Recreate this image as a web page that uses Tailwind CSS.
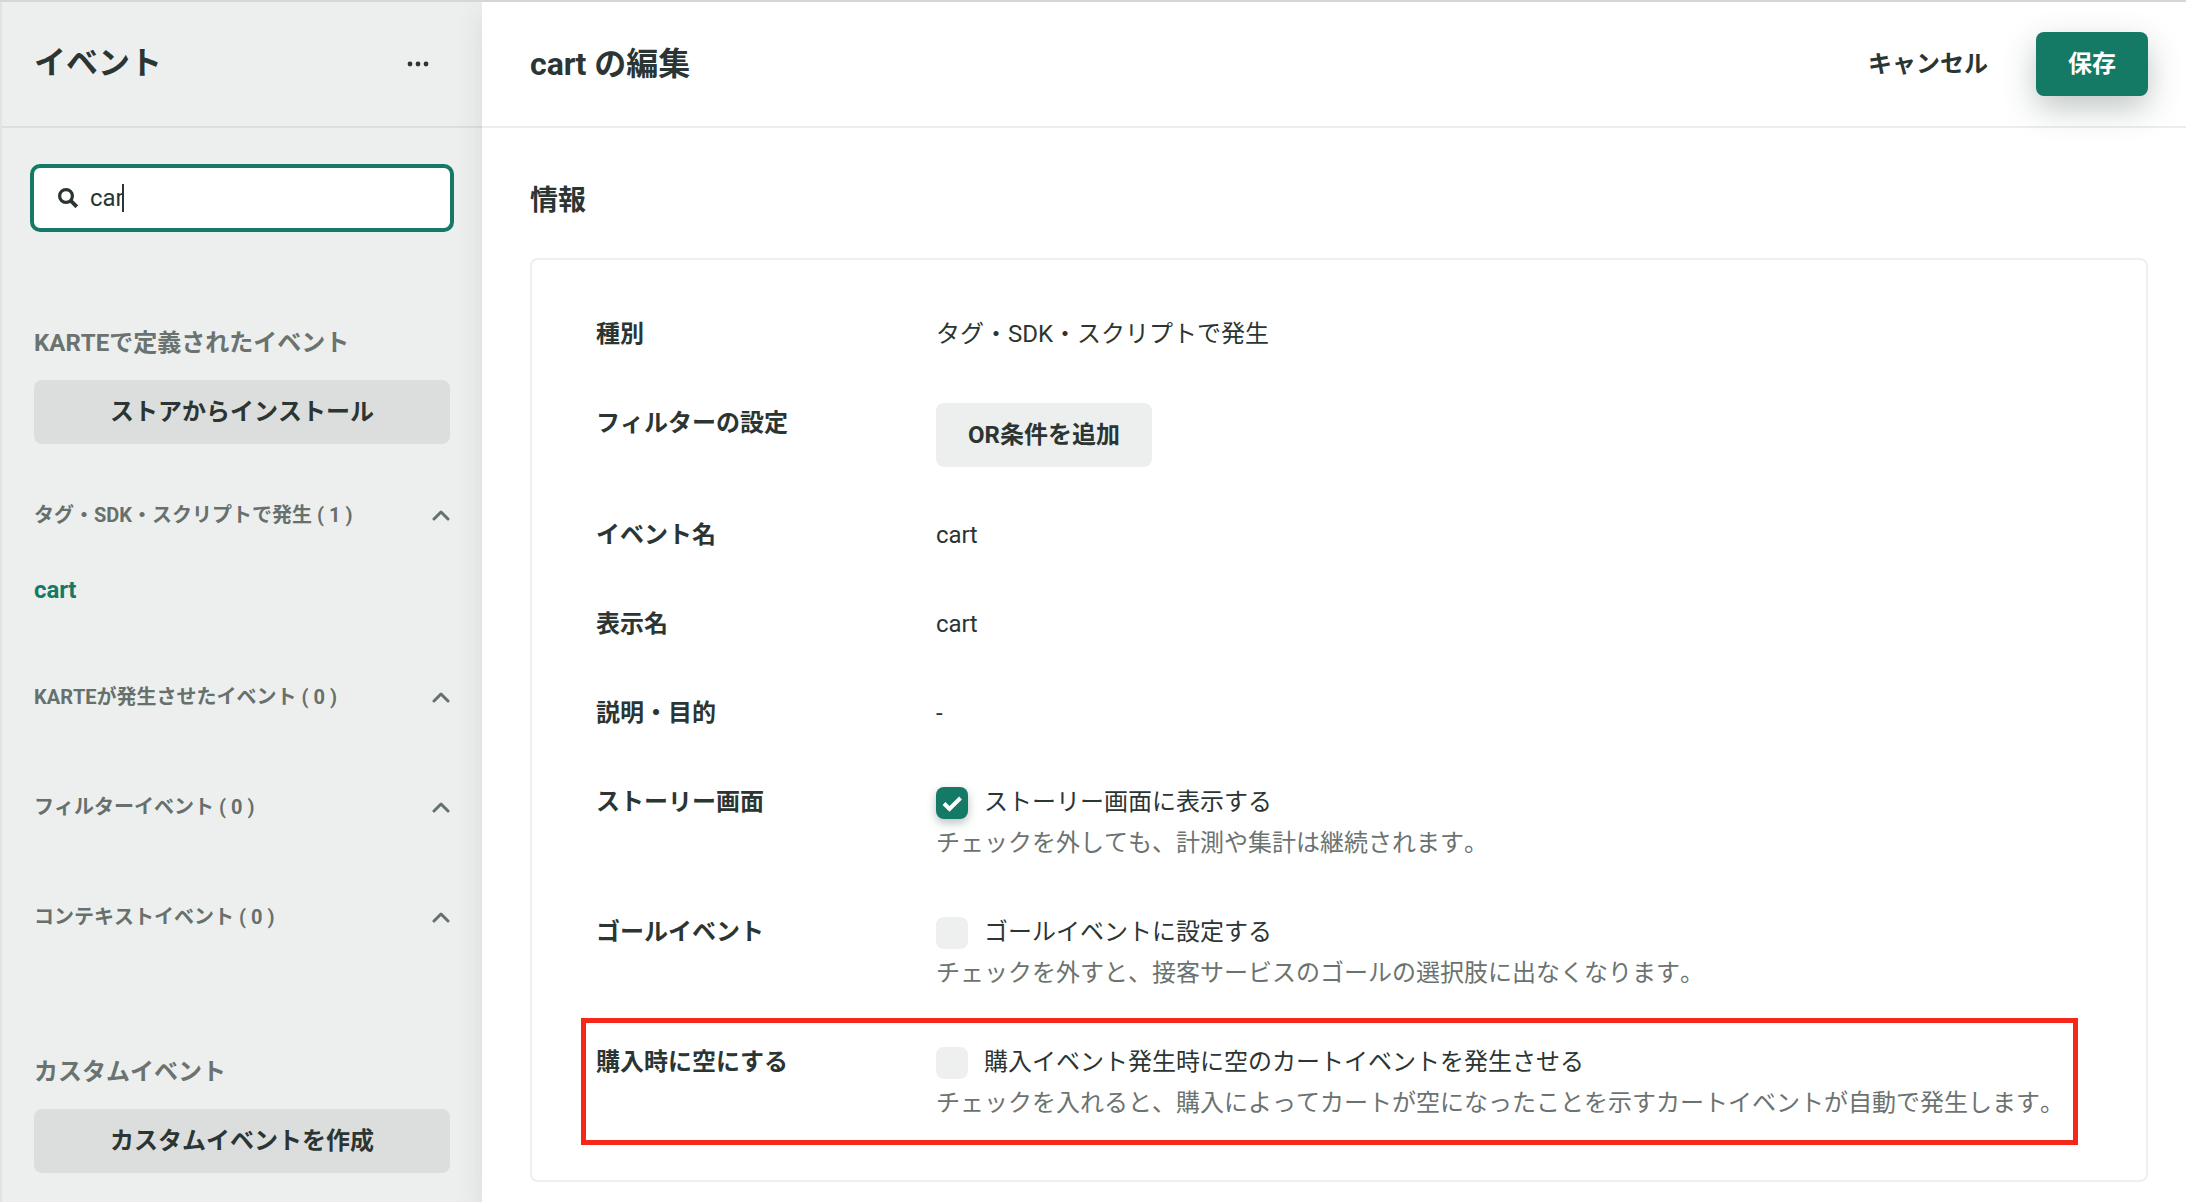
<!DOCTYPE html>
<html lang="ja">
<head>
<meta charset="utf-8">
<title>イベント</title>
<script src="https://cdn.jsdelivr.net/npm/@tailwindcss/browser@4"></script>
</head>
<body class="flex min-h-screen border-t-2 border-[#d6d6d6] bg-white font-['Roboto','Noto_Sans_CJK_JP',sans-serif] text-2xl/[41px] text-[#2b3533] [font-kerning:none]">

<aside class="flex w-[482px] shrink-0 flex-col border-l-2 border-[#e2e4e3] bg-[#edefee]">
  <header class="flex h-[126px] items-center justify-between border-b-2 border-[#dcdedd] pr-[53px] pb-[2px] pl-8">
    <h1 class="text-[32px]/[48px] font-bold">イベント</h1>
    <button type="button" aria-label="メニュー" class="pt-[2px]">
      <svg class="h-6 w-[22px]" viewBox="0 0 22 24" fill="currentColor"><circle cx="3" cy="12" r="2.4"/><circle cx="11" cy="12" r="2.4"/><circle cx="19" cy="12" r="2.4"/></svg>
    </button>
  </header>

  <div class="flex flex-col px-8 pt-9">
    <div class="-mx-1 flex h-[68px] items-center gap-3 rounded-[10px] border-4 border-[#157a65] bg-white px-6">
      <svg class="h-5 w-5 shrink-0" viewBox="0 0 20 20" fill="none" stroke="currentColor" stroke-width="3.2"><circle cx="8" cy="8" r="6.4"/><path d="M12.400 12.400 18.800 18.800" stroke-width="3.800"/></svg>
      <div class="relative grow">
        <input type="search" aria-label="イベントを検索" value="car" class="w-full bg-transparent outline-none">
        <span class="absolute top-[6px] left-8 h-7 w-[2px] bg-[#2b3533]"></span>
      </div>
    </div>

    <h2 class="mt-[91px] font-bold text-[#6b7370]">KARTEで定義されたイベント</h2>
    <button type="button" class="mt-4 h-16 rounded-lg bg-[#dcdedd] font-bold">ストアからインストール</button>

    <button type="button" class="mt-[51px] flex items-center justify-between text-left text-xl/[40px] font-bold text-[#66706d]">タグ・SDK・スクリプトで発生 ( 1 )
      <svg class="h-3 w-[18px]" viewBox="0 0 18 12" fill="none" stroke="currentColor" stroke-width="3" stroke-linecap="round" stroke-linejoin="round"><path d="M2 10 9 3l7 7"/></svg>
    </button>
    <a href="#cart" class="mt-[35px] font-bold text-[#157a65]">cart</a>
    <button type="button" class="mt-[66px] flex items-center justify-between text-left text-xl/[40px] font-bold text-[#66706d]">KARTEが発生させたイベント ( 0 )
      <svg class="h-3 w-[18px]" viewBox="0 0 18 12" fill="none" stroke="currentColor" stroke-width="3" stroke-linecap="round" stroke-linejoin="round"><path d="M2 10 9 3l7 7"/></svg>
    </button>
    <button type="button" class="mt-[70px] flex items-center justify-between text-left text-xl/[40px] font-bold text-[#66706d]">フィルターイベント ( 0 )
      <svg class="h-3 w-[18px]" viewBox="0 0 18 12" fill="none" stroke="currentColor" stroke-width="3" stroke-linecap="round" stroke-linejoin="round"><path d="M2 10 9 3l7 7"/></svg>
    </button>
    <button type="button" class="mt-[70px] flex items-center justify-between text-left text-xl/[40px] font-bold text-[#66706d]">コンテキストイベント ( 0 )
      <svg class="h-3 w-[18px]" viewBox="0 0 18 12" fill="none" stroke="currentColor" stroke-width="3" stroke-linecap="round" stroke-linejoin="round"><path d="M2 10 9 3l7 7"/></svg>
    </button>

    <h2 class="mt-[115px] font-bold text-[#6b7370]">カスタムイベント</h2>
    <button type="button" class="mt-4 h-16 rounded-lg bg-[#dcdedd] font-bold">カスタムイベントを作成</button>
  </div>
</aside>

<main class="grow bg-white shadow-[0_12px_28px_rgba(30,50,45,0.1)]">
  <header class="flex h-[126px] items-center justify-between border-b-2 border-[#eceeed] pr-[38px] pl-12">
    <h2 class="text-[32px]/[48px] font-bold">cart の編集</h2>
    <div class="flex items-center gap-12">
      <button type="button" class="font-bold">キャンセル</button>
      <button type="button" class="h-16 rounded-lg bg-[#157a65] px-8 font-bold text-white shadow-[0_12px_32px_rgba(30,50,45,0.28)]">保存</button>
    </div>
  </header>

  <section class="pt-[49px] pr-[38px] pl-12">
    <h3 class="text-[28px]/[48px] font-bold">情報</h3>
    <dl class="mt-[33px] flex flex-col gap-12 rounded-lg border-2 border-[#eeefef] px-16 pt-[54px] pb-14">
      <div class="flex">
        <dt class="w-[340px] shrink-0 font-bold">種別</dt>
        <dd>タグ・SDK・スクリプトで発生</dd>
      </div>
      <div class="flex">
        <dt class="w-[340px] shrink-0 font-bold">フィルターの設定</dt>
        <dd><button type="button" class="block h-16 rounded-lg bg-[#edefee] px-8 font-bold">OR条件を追加</button></dd>
      </div>
      <div class="flex">
        <dt class="w-[340px] shrink-0 font-bold">イベント名</dt>
        <dd>cart</dd>
      </div>
      <div class="flex">
        <dt class="w-[340px] shrink-0 font-bold">表示名</dt>
        <dd>cart</dd>
      </div>
      <div class="flex">
        <dt class="w-[340px] shrink-0 font-bold">説明・目的</dt>
        <dd>-</dd>
      </div>
      <div class="flex">
        <dt class="w-[340px] shrink-0 font-bold">ストーリー画面</dt>
        <dd>
          <label class="flex items-center gap-4">
            <span class="relative h-8 w-8">
              <input type="checkbox" checked class="block h-8 w-8 appearance-none rounded-lg bg-[#157a65] shadow-[0_4px_10px_rgba(30,50,45,0.3)]">
              <svg class="pointer-events-none absolute inset-0 h-8 w-8" viewBox="0 0 32 32" fill="none" stroke="white" stroke-width="4"><path d="m8 16.5 5.5 5.5L24.500 11"/></svg>
            </span>
            ストーリー画面に表示する
          </label>
          <p class="text-[#6b7370]">チェックを外しても、計測や集計は継続されます。</p>
        </dd>
      </div>
      <div class="flex">
        <dt class="w-[340px] shrink-0 font-bold">ゴールイベント</dt>
        <dd>
          <label class="flex items-center gap-4">
            <input type="checkbox" class="h-8 w-8 appearance-none rounded-lg bg-[#eeefef]">
            ゴールイベントに設定する
          </label>
          <p class="text-[#6b7370]">チェックを外すと、接客サービスのゴールの選択肢に出なくなります。</p>
        </dd>
      </div>
      <div class="relative flex">
        <dt class="w-[340px] shrink-0 font-bold">購入時に空にする</dt>
        <dd>
          <label class="flex items-center gap-4">
            <input type="checkbox" class="h-8 w-8 appearance-none rounded-lg bg-[#eeefef]">
            購入イベント発生時に空のカートイベントを発生させる
          </label>
          <p class="text-[#6b7370]">チェックを入れると、購入によってカートが空になったことを示すカートイベントが自動で発生します。</p>
        </dd>
        <div class="pointer-events-none absolute -top-6 right-1 -bottom-[21px] -left-[15px] border-[5px] border-[#f5261a]"></div>
      </div>
    </dl>
  </section>
</main>
</body>
</html>
